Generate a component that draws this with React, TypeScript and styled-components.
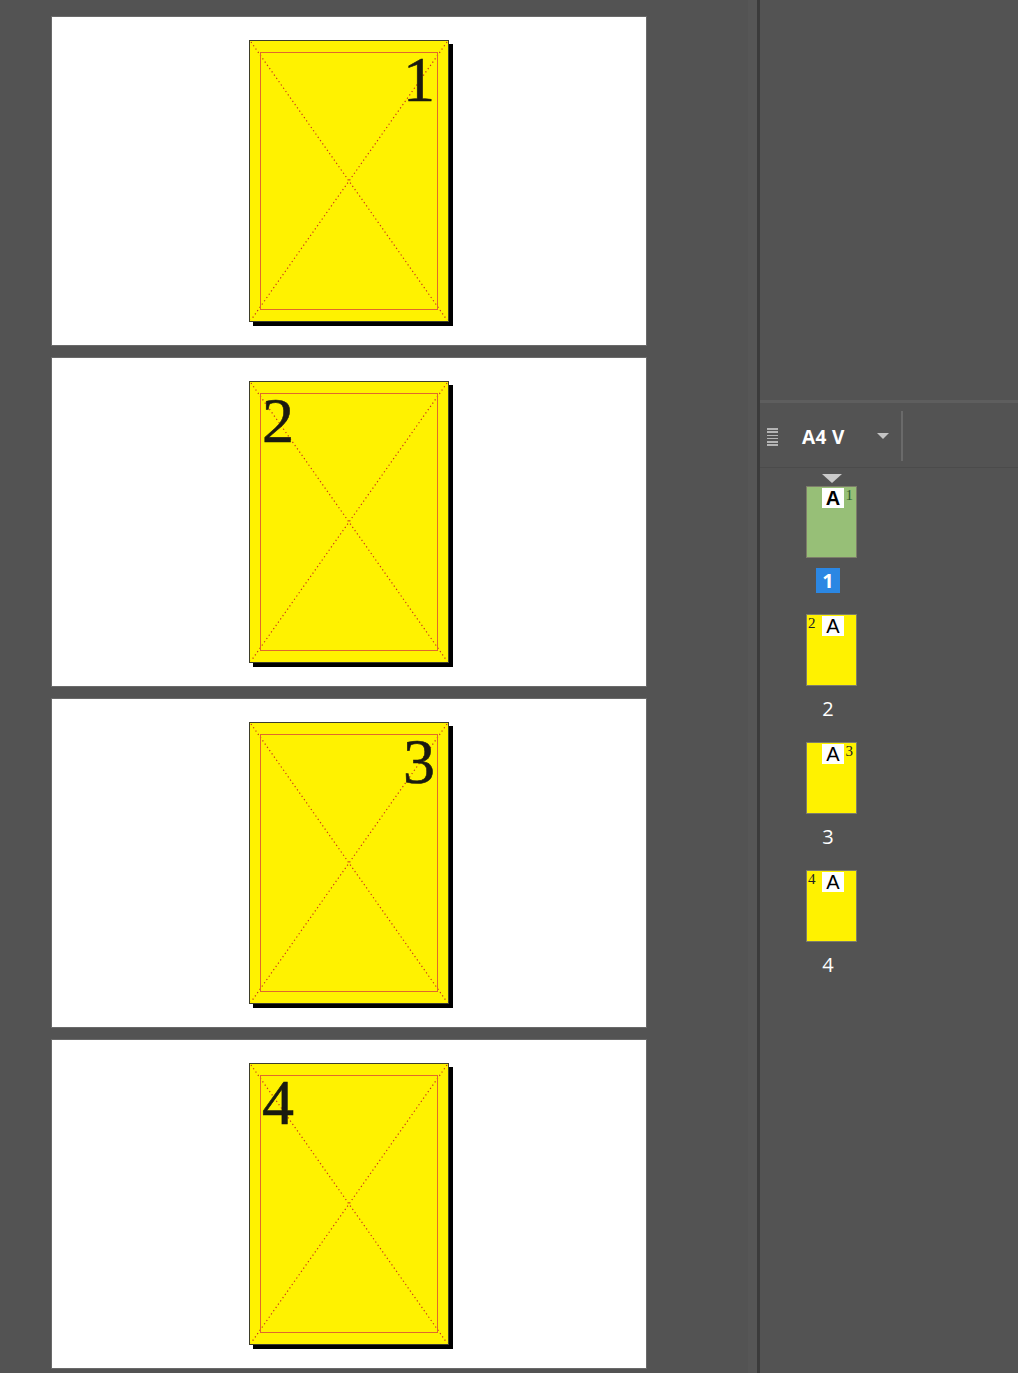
import React from "react";
import styled, { createGlobalStyle } from "styled-components";

const GlobalStyle = createGlobalStyle`
  html, body {
    margin: 0;
    padding: 0;
    background: #535353;
    font-family: "Open Sans", "Liberation Sans", sans-serif;
  }
`;

const Screen = styled.div`
  display: grid;
  grid-template-columns: 748px 9px 3px 1fr;
  width: 1018px;
  height: 1373px;
  overflow: hidden;
  background: #535353;
`;

const Canvas = styled.div`
  display: flex;
  flex-direction: column;
  gap: 13px;
  padding: 17px 0 0 52px;
`;

const Band = styled.div`
  background: #565656;
`;

const Rule = styled.div`
  background: #3b3b3b;
`;

const Spread = styled.div`
  width: 594px;
  height: 328px;
  background: #ffffff;
  box-shadow: 0 0 0 1px #6a6a6a;
  display: flex;
  align-items: center;
  justify-content: center;
`;

const Page = styled.div`
  position: relative;
  width: 198px;
  height: 280px;
  background: #fff200;
  border: 1px solid #3d3d2a;
  box-shadow: 4px 4px 0 #000;
`;

const Margin = styled.div<{ $right: boolean }>`
  position: absolute;
  left: 10px;
  top: 11px;
  right: 10px;
  bottom: 11px;
  border: 1px solid #e0692c;
  display: flex;
  justify-content: ${(p) => (p.$right ? "flex-end" : "flex-start")};
  align-items: flex-start;
`;

const Folio = styled.span<{ $right: boolean }>`
  font-family: "Liberation Serif", "Times New Roman", serif;
  font-size: 64px;
  line-height: 1;
  color: #1a1a10;
  -webkit-text-stroke: 0.6px #1a1a10;
  margin: -5px ${(p) => (p.$right ? "2px" : "0")} 0 ${(p) => (p.$right ? "0" : "1px")};
`;

const Cross = styled.svg`
  position: absolute;
  left: 0;
  top: 0;
`;

const Panel = styled.div`
  display: flex;
  flex-direction: column;
`;

const Blank = styled.div`
  height: 400px;
  flex: none;
`;

const Divider = styled.div`
  height: 3px;
  background: #5e5e5e;
  flex: none;
`;

const Header = styled.div`
  height: 64px;
  flex: none;
  display: flex;
  align-items: center;
  border-bottom: 1px solid #4b4b4b;
`;

const Grip = styled.div`
  width: 11px;
  margin: 4px 0 0 7px;
  display: flex;
  flex-direction: column;
  gap: 1.6px;
`;

const GripLine = styled.span`
  display: block;
  height: 1.6px;
  background: #b4b4b4;
`;

const Master = styled.span`
  margin: 4px 0 0 24px;
  width: 75px;
  color: #ffffff;
  font-weight: 700;
  font-size: 19px;
  letter-spacing: 0.4px;
`;

const Caret = styled.span`
  margin-top: 2px;
  width: 0;
  height: 0;
  border-left: 6px solid transparent;
  border-right: 6px solid transparent;
  border-top: 6px solid #c4c4c4;
`;

const HeaderSep = styled.div`
  width: 2px;
  height: 50px;
  margin: 2px 0 0 12px;
  background: #6a6a6a;
`;

const ThumbList = styled.div`
  display: flex;
  flex-direction: column;
  padding: 6px 0 0 46px;
`;

const ThumbItem = styled.div`
  display: flex;
  flex-direction: column;
  height: 128px;
`;

const Marker = styled.div<{ $show: boolean }>`
  height: 12px;
  display: flex;
  justify-content: center;
  width: 51px;
  &::before {
    content: "";
    display: ${(p) => (p.$show ? "block" : "none")};
    width: 0;
    height: 0;
    border-left: 10px solid transparent;
    border-right: 10px solid transparent;
    border-top: 9px solid #cacaca;
  }
`;

const Thumb = styled.div<{ $active: boolean }>`
  position: relative;
  width: 49px;
  height: 70px;
  border: 1px solid #7d7d6a;
  background: ${(p) => (p.$active ? "#97bf77" : "#fff200")};
`;

const ThumbA = styled.span<{ $active: boolean }>`
  position: absolute;
  left: 15px;
  top: 1px;
  width: 22px;
  height: 20px;
  background: #ffffff;
  color: #000;
  font-family: "Liberation Sans", Arial, sans-serif;
  font-weight: ${(p) => (p.$active ? 700 : 400)};
  font-size: 20px;
  line-height: 21px;
  text-align: center;
`;

const ThumbNum = styled.span<{ $right: boolean; $active: boolean }>`
  position: absolute;
  top: 1px;
  ${(p) => (p.$right ? "right: 3px;" : "left: 1px;")}
  font-family: "Liberation Serif", serif;
  font-size: 15px;
  line-height: 14px;
  color: ${(p) => (p.$active ? "#2f5a2f" : "#222")};
`;

const Label = styled.div<{ $active: boolean }>`
  margin: 10px 0 0 10px;
  width: 24px;
  height: 25px;
  display: flex;
  align-items: center;
  justify-content: center;
  color: #ffffff;
  font-size: 20px;
  font-weight: ${(p) => (p.$active ? 700 : 400)};
  background: ${(p) => (p.$active ? "#2b87e3" : "transparent")};
`;

const pages = [1, 2, 3, 4];

const PageSheet = ({ n }: { n: number }) => {
  const right = n % 2 === 1;
  return (
    <Spread>
      <Page>
        <Cross width="198" height="280" viewBox="0 0 198 280">
          <line x1="1" y1="1" x2="197" y2="279" stroke="#c8321e" strokeWidth="1.2" strokeDasharray="1.2 2.8" />
          <line x1="197" y1="1" x2="1" y2="279" stroke="#c8321e" strokeWidth="1.2" strokeDasharray="1.2 2.8" />
        </Cross>
        <Margin $right={right}>
          <Folio $right={right}>{n}</Folio>
        </Margin>
      </Page>
    </Spread>
  );
};

export default function App() {
  return (
    <Screen>
      <GlobalStyle />
      <Canvas>
        {pages.map((n) => (
          <PageSheet key={n} n={n} />
        ))}
      </Canvas>
      <Band />
      <Rule />
      <Panel>
        <Blank />
        <Divider />
        <Header>
          <Grip>
            {[0, 1, 2, 3, 4, 5].map((i) => (
              <GripLine key={i} />
            ))}
          </Grip>
          <Master>A4 V</Master>
          <Caret />
          <HeaderSep />
        </Header>
        <ThumbList>
          {pages.map((n) => {
            const active = n === 1;
            const right = n % 2 === 1;
            return (
              <ThumbItem key={n}>
                <Marker $show={active} />
                <Thumb $active={active}>
                  <ThumbA $active={active}>A</ThumbA>
                  <ThumbNum $right={right} $active={active}>
                    {n}
                  </ThumbNum>
                </Thumb>
                <Label $active={active}>{n}</Label>
              </ThumbItem>
            );
          })}
        </ThumbList>
      </Panel>
    </Screen>
  );
}
